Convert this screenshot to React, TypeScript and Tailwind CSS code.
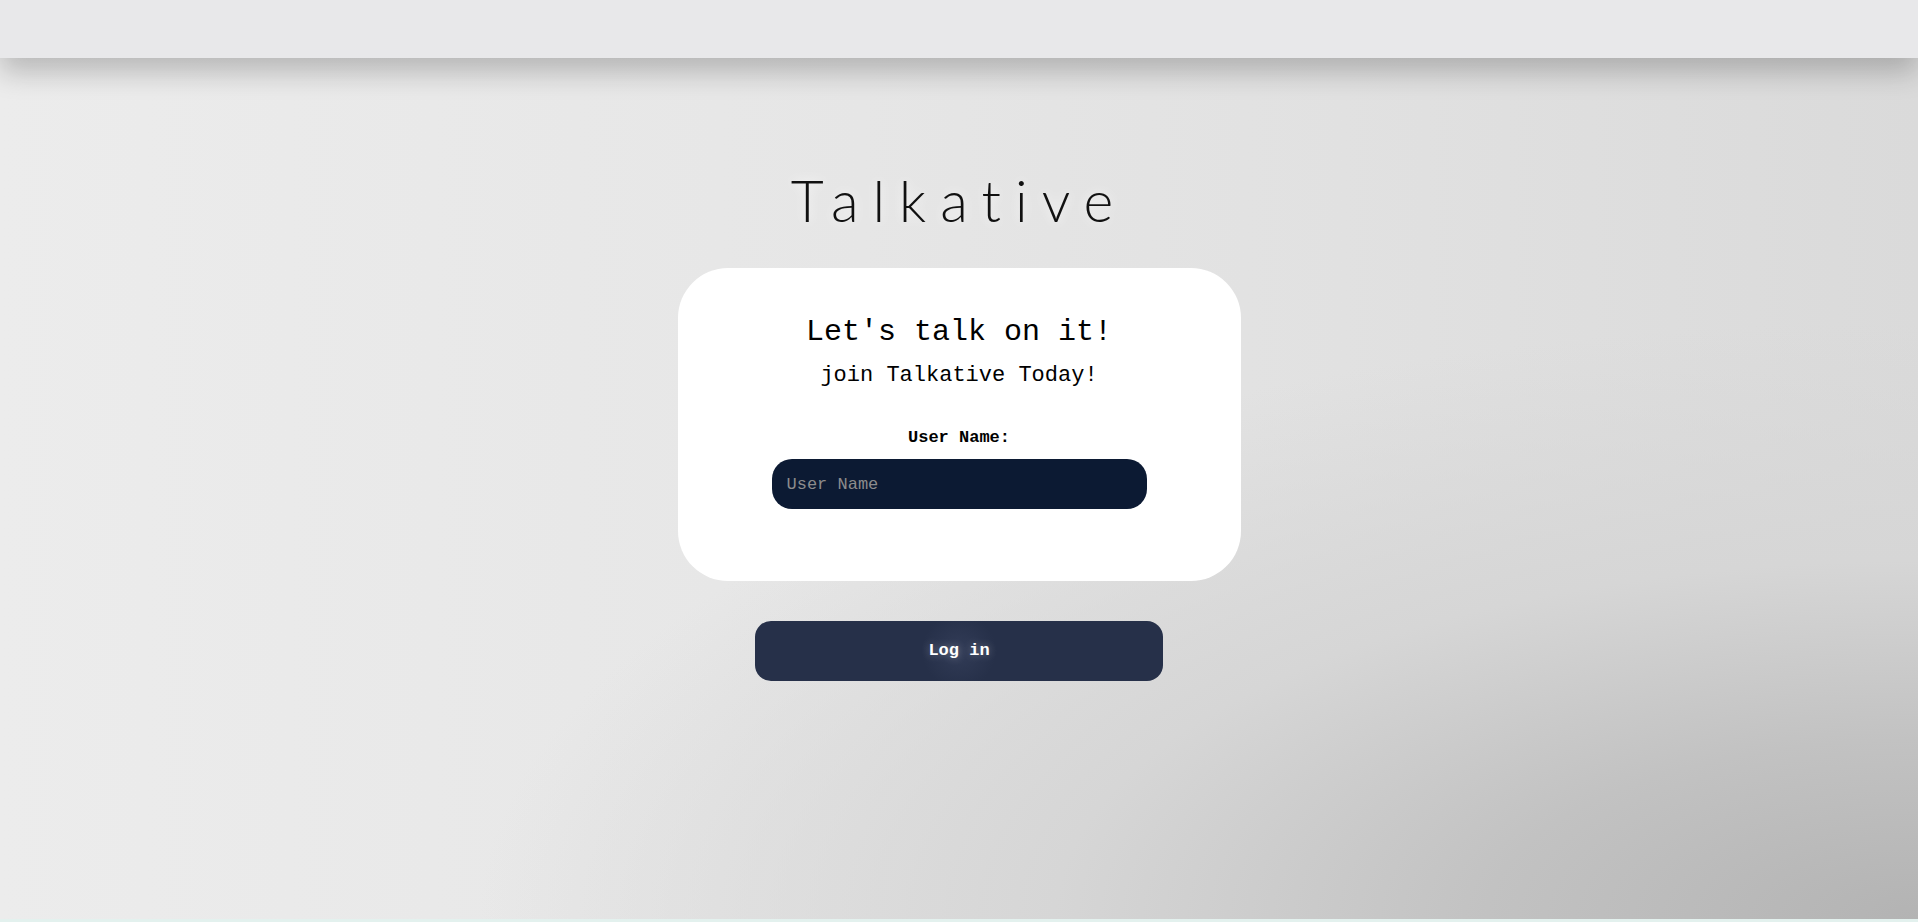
import { useState } from 'react'

export default function App() {
  const [name, setName] = useState('')

  return (
    <div className="bg-[#e3f1ee] min-h-[922px]">
      <div className="h-[919px] flex flex-col bg-[radial-gradient(ellipse_75%_65%_at_100%_100%,#b3b3b3_0%,#c2c2c2_30%,#d6d6d6_60%,rgba(230,230,230,0)_100%),linear-gradient(90deg,#ececec_0%,#e6e6e6_45%,#e1e1e1_70%,#dadada_100%)]">
        <header className="h-[58px] shrink-0 bg-[#e8e8ea] shadow-[0_14px_28px_rgba(0,0,0,0.22)] relative z-10" />
        <main className="flex flex-col items-center pt-[112px]">
          <h1 className="font-['Lato',sans-serif] font-light text-[57px] leading-[60px] tracking-[14px] text-[#111] [text-shadow:0_0_12px_rgba(255,255,255,0.9)]">
            Talkative
          </h1>
          <div className="mt-[38px] w-[563px] h-[313px] bg-white rounded-[50px] flex flex-col items-center pt-[46px] font-['Liberation_Mono','Courier_New',monospace] text-black">
            <h2 className="text-[30px] leading-[36px]">Let's talk on it!</h2>
            <p className="text-[22px] leading-[28px] mt-[12px]">join Talkative Today!</p>
            <label htmlFor="username" className="mt-[38px] text-[17px] leading-[20px] font-bold">User Name:</label>
            <input
              id="username"
              value={name}
              onChange={(e) => setName(e.target.value)}
              placeholder="User Name"
              className="mt-[11px] w-[375px] h-[50px] rounded-[20px] bg-[#0c1a33] text-white placeholder:text-[#8c8c8c] px-[15px] text-[17px] outline-none font-['Liberation_Mono','Courier_New',monospace]"
            />
          </div>
          <button className="mt-[40px] w-[408px] h-[60px] rounded-[16px] bg-[radial-gradient(circle_at_50%_50%,#323c57_0%,#263049_18%,#263049_100%)] text-white font-bold text-[17px] font-['Liberation_Mono','Courier_New',monospace] [text-shadow:0_0_8px_rgba(255,255,255,0.35)]">
            Log in
          </button>
        </main>
      </div>
    </div>
  )
}
